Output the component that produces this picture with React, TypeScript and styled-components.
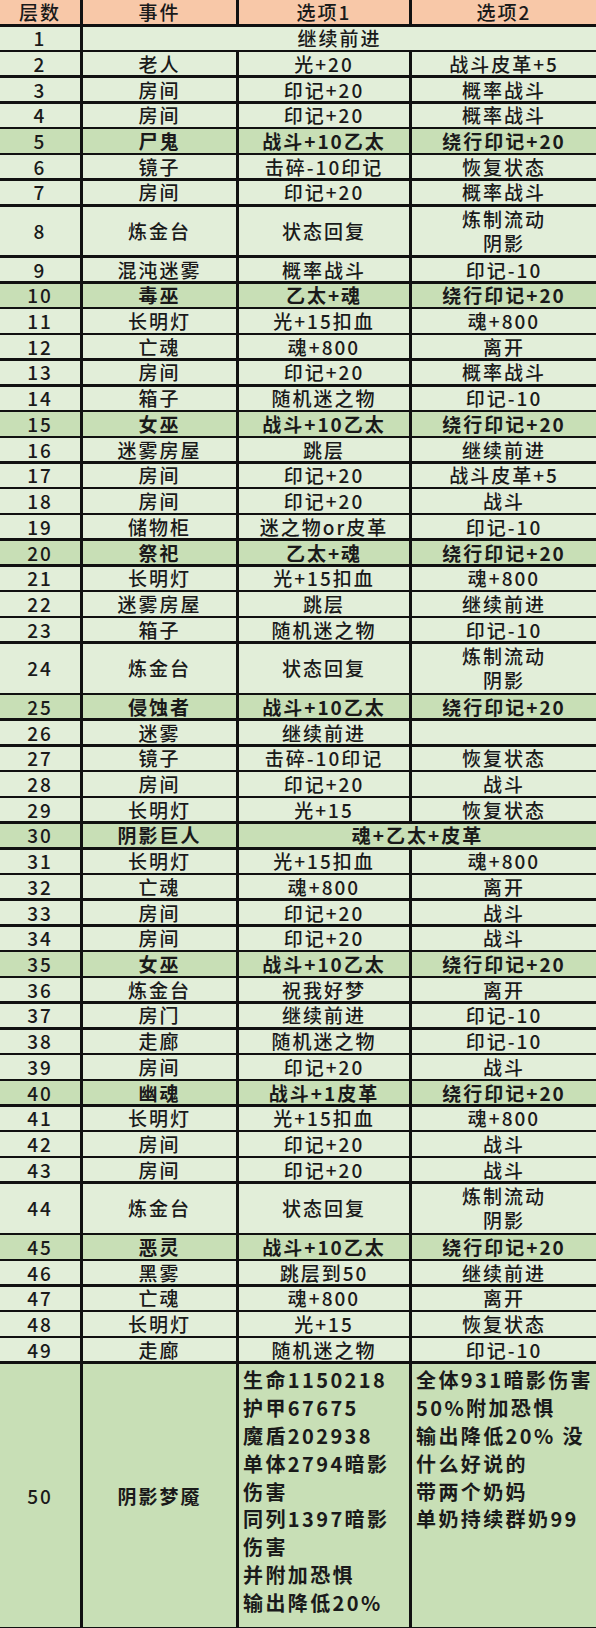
import React, { FunctionComponent } from 'react'
import styled, { createGlobalStyle } from 'styled-components'

const black = '#111'
const peach = '#f8c8a8'
const lightGreen = '#e2eed9'
const darkGreen = '#c8dfb6'

const UNIT = 23.23
const GAP = 2.5

const GlobalStyle = createGlobalStyle`
  html, body {
    margin: 0;
    padding: 0;
    background: ${black};
  }
  body {
    font-family: "Noto Sans CJK SC", "Noto Sans", sans-serif;
    color: #1a1a1a;
  }
`

const Table = styled.div`
  display: grid;
  grid-template-columns: 80px 153px 170px 1fr;
  column-gap: 3px;
  row-gap: ${GAP}px;
  width: 596px;
  background: ${black};
`

type CellProps = {
  $bg: string
  $h: number
  $bold?: boolean
  $span?: number
}

const Cell = styled.div<CellProps>`
  grid-column: span ${p => p.$span || 1};
  height: ${p => p.$h}px;
  background: ${p => p.$bg};
  display: flex;
  flex-direction: column;
  align-items: center;
  justify-content: center;
  font-size: 19px;
  line-height: 22px;
  letter-spacing: 2px;
  font-weight: ${p => (p.$bold ? 700 : 500)};
  text-align: center;
  white-space: nowrap;
`

const NoteCell = styled.div<{ $h: number }>`
  height: ${p => p.$h}px;
  background: ${darkGreen};
  padding: 2px 0 0 4px;
  box-sizing: border-box;
  font-size: 20px;
  line-height: 27.9px;
  letter-spacing: 2.4px;
  font-weight: 700;
  white-space: nowrap;
`

const Line = styled.div``

const TallLine = styled.div`
  line-height: 24px;
`

type Row = {
  n: number
  ev: string
  a?: string
  b?: string
  boss?: boolean
  span?: 'all' | 'opts'
  tall?: boolean
}

const rows: Row[] = [
  { n: 1, ev: '继续前进', span: 'all' },
  { n: 2, ev: '老人', a: '光+20', b: '战斗皮革+5' },
  { n: 3, ev: '房间', a: '印记+20', b: '概率战斗' },
  { n: 4, ev: '房间', a: '印记+20', b: '概率战斗' },
  { n: 5, ev: '尸鬼', a: '战斗+10乙太', b: '绕行印记+20', boss: true },
  { n: 6, ev: '镜子', a: '击碎-10印记', b: '恢复状态' },
  { n: 7, ev: '房间', a: '印记+20', b: '概率战斗' },
  { n: 8, ev: '炼金台', a: '状态回复', b: '炼制流动\n阴影', tall: true },
  { n: 9, ev: '混沌迷雾', a: '概率战斗', b: '印记-10' },
  { n: 10, ev: '毒巫', a: '乙太+魂', b: '绕行印记+20', boss: true },
  { n: 11, ev: '长明灯', a: '光+15扣血', b: '魂+800' },
  { n: 12, ev: '亡魂', a: '魂+800', b: '离开' },
  { n: 13, ev: '房间', a: '印记+20', b: '概率战斗' },
  { n: 14, ev: '箱子', a: '随机迷之物', b: '印记-10' },
  { n: 15, ev: '女巫', a: '战斗+10乙太', b: '绕行印记+20', boss: true },
  { n: 16, ev: '迷雾房屋', a: '跳层', b: '继续前进' },
  { n: 17, ev: '房间', a: '印记+20', b: '战斗皮革+5' },
  { n: 18, ev: '房间', a: '印记+20', b: '战斗' },
  { n: 19, ev: '储物柜', a: '迷之物or皮革', b: '印记-10' },
  { n: 20, ev: '祭祀', a: '乙太+魂', b: '绕行印记+20', boss: true },
  { n: 21, ev: '长明灯', a: '光+15扣血', b: '魂+800' },
  { n: 22, ev: '迷雾房屋', a: '跳层', b: '继续前进' },
  { n: 23, ev: '箱子', a: '随机迷之物', b: '印记-10' },
  { n: 24, ev: '炼金台', a: '状态回复', b: '炼制流动\n阴影', tall: true },
  { n: 25, ev: '侵蚀者', a: '战斗+10乙太', b: '绕行印记+20', boss: true },
  { n: 26, ev: '迷雾', a: '继续前进', b: '' },
  { n: 27, ev: '镜子', a: '击碎-10印记', b: '恢复状态' },
  { n: 28, ev: '房间', a: '印记+20', b: '战斗' },
  { n: 29, ev: '长明灯', a: '光+15', b: '恢复状态' },
  { n: 30, ev: '阴影巨人', a: '魂+乙太+皮革', boss: true, span: 'opts' },
  { n: 31, ev: '长明灯', a: '光+15扣血', b: '魂+800' },
  { n: 32, ev: '亡魂', a: '魂+800', b: '离开' },
  { n: 33, ev: '房间', a: '印记+20', b: '战斗' },
  { n: 34, ev: '房间', a: '印记+20', b: '战斗' },
  { n: 35, ev: '女巫', a: '战斗+10乙太', b: '绕行印记+20', boss: true },
  { n: 36, ev: '炼金台', a: '祝我好梦', b: '离开' },
  { n: 37, ev: '房门', a: '继续前进', b: '印记-10' },
  { n: 38, ev: '走廊', a: '随机迷之物', b: '印记-10' },
  { n: 39, ev: '房间', a: '印记+20', b: '战斗' },
  { n: 40, ev: '幽魂', a: '战斗+1皮革', b: '绕行印记+20', boss: true },
  { n: 41, ev: '长明灯', a: '光+15扣血', b: '魂+800' },
  { n: 42, ev: '房间', a: '印记+20', b: '战斗' },
  { n: 43, ev: '房间', a: '印记+20', b: '战斗' },
  { n: 44, ev: '炼金台', a: '状态回复', b: '炼制流动\n阴影', tall: true },
  { n: 45, ev: '恶灵', a: '战斗+10乙太', b: '绕行印记+20', boss: true },
  { n: 46, ev: '黑雾', a: '跳层到50', b: '继续前进' },
  { n: 47, ev: '亡魂', a: '魂+800', b: '离开' },
  { n: 48, ev: '长明灯', a: '光+15', b: '恢复状态' },
  { n: 49, ev: '走廊', a: '随机迷之物', b: '印记-10' }
]

const bossStats = [
  '生命1150218',
  '护甲67675',
  '魔盾202938',
  '单体2794暗影',
  '伤害',
  '同列1397暗影',
  '伤害',
  '并附加恐惧',
  '输出降低20%'
]

const bossNotes = [
  '全体931暗影伤害',
  '50%附加恐惧',
  '输出降低20% 没',
  '什么好说的',
  '带两个奶妈',
  '单奶持续群奶99'
]

const lines = (text: string) =>
  text.split('\n').map((t, i) => <TallLine key={i}>{t}</TallLine>)

const headers = ['层数', '事件', '选项1', '选项2']

const App: FunctionComponent = () => {
  const single = UNIT
  const double = UNIT * 2 + GAP
  const lastH = 1628 - 24 - GAP - 52 * (UNIT + GAP)
  return (
    <>
      <GlobalStyle />
      <Table>
        {headers.map(h => (
          <Cell key={h} $bg={peach} $h={24}>
            {h}
          </Cell>
        ))}

        {rows.map(r => {
          const bg = r.boss ? darkGreen : lightGreen
          const h = r.tall ? double : single
          return (
            <React.Fragment key={r.n}>
              <Cell $bg={bg} $h={h}>
                {r.n}
              </Cell>
              <Cell $bg={bg} $h={h} $bold={r.boss} $span={r.span === 'all' ? 3 : 1}>
                {r.ev}
              </Cell>
              {r.span !== 'all' && (
                <Cell $bg={bg} $h={h} $bold={r.boss} $span={r.span === 'opts' ? 2 : 1}>
                  {r.a}
                </Cell>
              )}
              {!r.span && (
                <Cell $bg={bg} $h={h} $bold={r.boss}>
                  {lines(r.b || '')}
                </Cell>
              )}
            </React.Fragment>
          )
        })}

        <Cell $bg={darkGreen} $h={lastH}>
          50
        </Cell>
        <Cell $bg={darkGreen} $h={lastH} $bold>
          阴影梦魇
        </Cell>
        <NoteCell $h={lastH}>
          {bossStats.map((t, i) => (
            <Line key={i}>{t}</Line>
          ))}
        </NoteCell>
        <NoteCell $h={lastH}>
          {bossNotes.map((t, i) => (
            <Line key={i}>{t}</Line>
          ))}
        </NoteCell>
      </Table>
    </>
  )
}

export default App
